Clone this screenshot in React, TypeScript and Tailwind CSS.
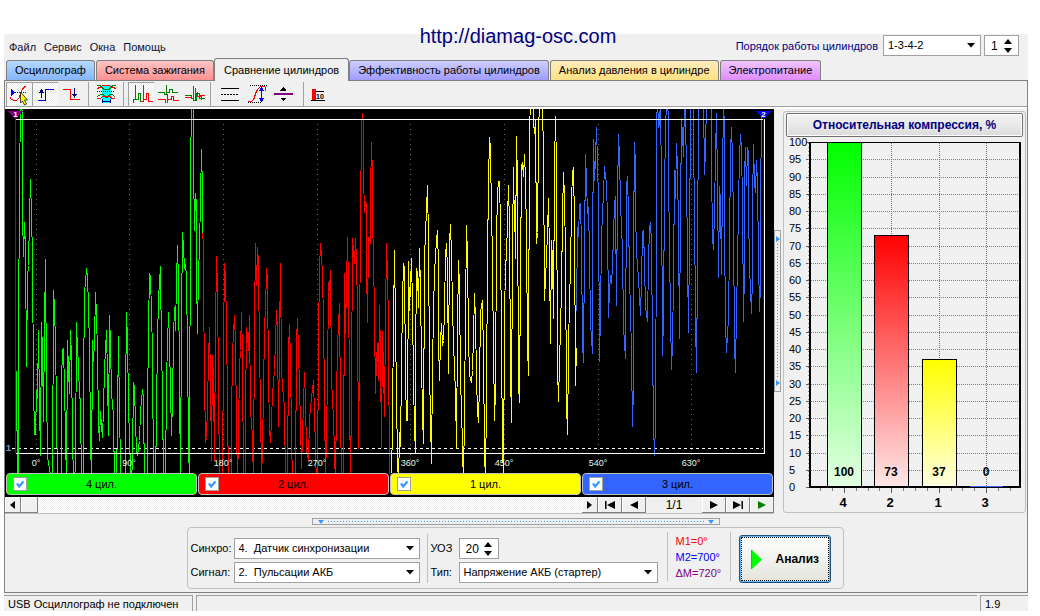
import { useState, type ReactNode } from 'react';
import clsx from 'clsx';

const TABS = [
  { name: 'Осциллограф', style: 'from-[#b5d8ff] to-[#86b6fa]' },
  { name: 'Система зажигания', style: 'from-[#ffc4c4] to-[#ff9090]' },
  { name: 'Сравнение цилиндров', style: '' },
  { name: 'Эффективность работы цилиндров', style: 'from-[#cfcfff] to-[#a09cff]' },
  { name: 'Анализ давления в цилиндре', style: 'from-[#ffecbd] to-[#ffe080]' },
  { name: 'Электропитание', style: 'from-[#f0c4ff] to-[#df8cfa]' },
];

const CYLINDERS = [
  { id: 4, value: 100, x: 844, color: '#00ff00', pale: '#e4ffe4', pill: 'bg-[#00ff00]' },
  { id: 2, value: 73, x: 891, color: '#ff0000', pale: '#ffe8e8', pill: 'bg-[#ff0000]' },
  { id: 1, value: 37, x: 939, color: '#ffff00', pale: '#ffffe0', pill: 'bg-[#ffff00]' },
  { id: 3, value: 0, x: 986, color: '#3366ff', pale: '#e0e8ff', pill: 'bg-[#3366ff]' },
];

// signal traces, one per cylinder, in plot coordinates
const TRACES = [
  {
    color: '#00ff00',
    points:
      '16,371 17,472 18,472 18,335 19,190 20,109 21,109 22,121 22,215 23,256 24,222 25,248 26,366 27,277 28,265 29,218 30,179 31,215 32,257 33,386 34,434 35,434 36,390 37,398 38,330 39,405 40,455 41,322 42,350 43,421 44,325 45,259 46,383 47,457 52,472 53,290 54,307 55,343 56,407 57,472 61,472 61,381 62,349 63,348 64,387 65,434 66,472 67,340 68,370 69,393 70,330 71,359 72,434 73,472 75,467 76,322 77,350 78,362 79,398 80,398 81,472 83,472 83,385 84,293 86,268 87,277 88,306 89,348 90,433 91,472 92,340 93,361 94,340 95,292 96,315 97,352 98,425 99,440 100,411 101,426 102,437 103,408 104,368 105,350 106,330 107,375 108,435 109,315 110,343 111,393 113,415 114,472 116,472 117,415 118,336 119,415 120,460 121,472 125,472 125,398 126,312 127,341 128,403 129,441 131,472 132,455 133,382 134,387 135,423 136,450 137,455 139,440 140,411 142,389 143,398 144,472 147,472 147,410 148,327 149,273 150,276 151,313 152,350 153,472 155,472 156,410 157,340 158,298 160,266 161,350 162,390 163,472 165,472 166,378 168,312 169,343 171,435 172,400 173,336 174,307 175,330 176,280 177,245 178,280 179,378 180,472 181,316 182,232 183,247 184,267 185,265 186,275 187,352 188,438 189,472 190,177 191,109 193,109 193,164 194,230 195,193 196,204 196,274 197,333 198,270 199,249 200,197 201,149 202,191 202,233',
  },
  {
    color: '#ff0000',
    points:
      '202,233 203,244 203,284 204,377 205,442 206,437 207,405 208,358 209,327 210,378 211,460 212,355 213,380 214,460 215,330 216,256 217,288 218,382 219,472 222,472 223,342 224,263 225,278 226,322 227,405 228,472 231,472 231,421 232,352 234,315 235,343 236,423 237,472 238,434 239,365 240,350 241,312 242,353 243,472 245,472 245,413 246,327 247,335 248,350 249,315 250,410 252,436 253,472 254,320 255,243 256,285 257,247 258,261 259,358 260,397 261,472 263,397 264,323 265,310 266,268 267,278 268,377 269,428 270,442 271,420 272,393 274,370 276,310 277,330 278,426 279,340 280,263 281,370 283,398 284,404 285,472 287,472 288,350 289,324 290,360 291,432 292,472 295,472 296,340 297,318 298,350 300,423 301,468 303,403 304,372 305,402 306,450 308,460 309,418 311,397 313,380 314,413 316,472 317,472 318,337 319,268 320,243 321,255 322,274 323,321 324,393 325,472 327,380 328,282 329,290 330,270 331,380 333,418 335,472 336,398 337,345 339,303 340,407 341,472 343,472 344,273 345,333 346,285 347,237 348,283 349,390 350,472 351,390 352,238 353,250 354,263 355,238 356,258 357,312 358,448 359,357 360,215 361,126 362,113 363,125 363,175 364,212 365,201 366,205 366,265 367,322 368,237 369,238 370,243 370,193 371,142 372,177 372,222 373,254 374,317 375,393 376,360 377,343 378,380 379,305 380,353 381,447 382,331 383,370 384,416 385,317 386,243 387,275 388,323 389,472',
  },
  {
    color: '#ffff00',
    points:
      '391,472 392,416 393,321 394,250 395,323 396,398 397,458 398,472 399,432 400,446 401,367 402,300 403,263 404,267 405,377 406,420 407,420 408,261 409,310 411,258 412,305 413,382 414,427 415,453 415,362 416,268 417,273 418,307 419,248 420,288 421,360 422,415 423,443 424,257 426,209 427,185 428,240 429,368 430,420 431,463 432,368 433,310 434,272 435,256 436,239 437,230 438,267 438,340 439,380 440,340 441,323 442,345 443,340 444,310 445,254 446,243 447,270 448,373 449,241 450,224 451,254 452,307 453,343 455,393 456,448 457,330 458,260 459,286 460,380 461,408 463,472 464,408 465,315 466,225 467,255 468,337 469,375 471,382 472,370 473,337 474,293 475,320 476,377 477,411 478,422 479,383 480,312 482,300 483,358 484,446 485,472 486,393 487,258 488,182 489,137 490,147 490,168 491,196 492,273 493,345 494,420 495,390 496,238 497,193 498,181 499,181 500,224 501,353 502,440 503,472 504,320 505,262 506,258 507,218 508,185 509,225 510,370 511,422 512,242 513,167 514,231 515,197 515,258 516,136 517,182 518,385 519,402 520,271 521,166 522,162 523,176 524,154 525,178 526,238 527,345 528,375 529,133 530,109 533,109 533,122 534,133 535,120 536,243 537,232 538,136 539,109 541,109 542,117 543,144 544,300 545,277 546,258 547,232 548,198 549,255 550,343 551,240 552,259 553,318 554,166 555,116 556,165 557,368 558,401 560,327 561,290 562,214 563,172 564,197 565,254 566,402 567,434 568,355 569,293 570,275 571,201 572,172 573,167 574,223 575,385 576,348',
  },
  {
    color: '#3366ff',
    points:
      '576,311 577,227 578,236 579,205 580,203 581,244 582,343 583,362 584,247 585,154 586,180 587,213 588,207 589,253 590,323 592,353 592,247 593,139 594,180 595,157 596,127 597,162 598,200 599,361 600,313 601,238 602,212 603,193 604,166 605,176 606,183 607,218 608,317 609,290 610,275 611,283 612,267 613,234 614,204 615,196 616,305 617,197 618,134 619,156 620,202 621,228 622,248 623,327 625,358 626,185 627,176 628,213 629,277 630,310 631,353 632,426 633,385 633,243 634,142 635,164 635,210 636,252 638,278 640,315 641,280 642,232 643,230 644,263 645,307 647,321 648,261 649,227 650,222 651,242 652,345 653,423 654,455 655,423 656,219 656,125 657,109 658,127 659,123 660,109 660,115 661,173 662,355 663,317 664,187 665,132 666,109 667,109 668,123 668,172 669,248 670,315 671,369 672,343 673,281 674,170 675,198 676,143 677,168 678,230 679,338 680,210 681,118 682,134 683,156 684,109 685,115 686,173 687,258 688,332 689,239 690,120 691,109 693,109 693,149 694,205 695,320 696,372 697,267 698,109 703,109 704,174 705,150 706,109 711,109 711,163 712,238 713,249 714,210 715,154 716,113 717,181 718,277 719,186 720,200 721,274 722,180 723,109 724,132 724,228 725,322 726,352 728,317 729,245 730,151 731,127 732,157 733,224 734,345 735,372 736,307 737,267 738,205 739,155 740,134 741,148 742,203 743,321 744,268 744,175 745,147 746,185 747,147 748,153 748,210 749,267 750,290 751,313 752,275 752,205 753,144 754,182 755,192 756,160 757,182 758,257 759,311 760,285 760,202 761,115 762,115',
  },
];

const GRID = [
  { x: 36, deg: 0 },
  { x: 129, deg: 90 },
  { x: 223, deg: 180 },
  { x: 317, deg: 270 },
  { x: 410, deg: 360 },
  { x: 504, deg: 450 },
  { x: 598, deg: 540 },
  { x: 691, deg: 630 },
];

const pct = (x: number) => `${((x - 5) / 769) * 100}%`;

// samples at the rails run on past the edge of the plot
const offScale = (points: string) => points.replaceAll(',472', ',485').replaceAll(',109', ',98');

function Select({ id, label, options, className }: { id: string; label?: string; options: string[]; className?: string }) {
  return (
    <div className={clsx('relative', className)}>
      <select
        id={id}
        aria-label={label}
        className="block w-full h-[21px] appearance-none border border-[#a0a0a0] bg-white pl-1 pr-4 text-[11px] leading-none text-black outline-none"
      >
        {options.map(o => <option key={o}>{o}</option>)}
      </select>
      <svg className="absolute right-1.5 top-2 pointer-events-none" width="8" height="5" viewBox="0 0 8 5">
        <path d="M0 0h8L4 4.5z" fill="#000" />
      </svg>
    </div>
  );
}

function Spinner({ id, label, initial, className }: { id: string; label?: string; initial: number; className?: string }) {
  const [value, setValue] = useState(initial);
  return (
    <div className={clsx('flex h-[21px] border border-[#a0a0a0] bg-white', className)}>
      <input
        id={id}
        aria-label={label}
        className="min-w-0 flex-1 bg-transparent pl-1.5 text-[12px] text-black outline-none"
        value={value}
        onChange={e => setValue(Number(e.target.value) || 0)}
      />
      <div className="flex w-[14px] flex-col justify-center gap-1">
        <button aria-label="+" onClick={() => setValue(value + 1)}>
          <svg className="block" width="8" height="5" viewBox="0 0 8 5"><path d="M0 5h8L4 0z" /></svg>
        </button>
        <button aria-label="−" onClick={() => setValue(value - 1)}>
          <svg className="block" width="8" height="5" viewBox="0 0 8 5"><path d="M0 0h8L4 5z" /></svg>
        </button>
      </div>
    </div>
  );
}

function ToolButton({ x, wide, pressed, title, children }: { x: number; wide?: boolean; pressed?: boolean; title: string; children: ReactNode }) {
  const w = wide ? 28 : 26;
  return (
    <button
      aria-label={title}
      className={clsx(
        'h-6',
        wide ? 'w-7' : 'w-[26px]',
        pressed && 'border-l border-t border-[#a0a0a0] bg-[repeating-conic-gradient(#ffffff_0_25%,#ececec_0_50%)] bg-[length:2px_2px]'
      )}
    >
      <svg
        className={clsx('block', pressed && '-ml-px -mt-px')}
        width={w}
        height="24"
        viewBox={`${x} 82 ${w} 24`}
        fill="none"
        shapeRendering="crispEdges"
      >
        {children}
      </svg>
    </button>
  );
}

const Separator = () => <div className="mx-1 h-6 w-px bg-[#a0a0a0]" />;

function Toolbar() {
  return (
    <div className="flex h-[25px] items-end pl-px">
      <ToolButton x={6} pressed title="Курсор">
        <path d="M11 88.5v8l4-4z" fill="#0000ff" />
        <path d="M15 92.5h11" stroke="#0000ff" strokeDasharray="1 1" />
        <path d="M10 97.5c1 3 7 4.500 9 .5s2-7 4-9.500 2-2 3-2" stroke="#ff0000" />
        <path d="M20.500 92v11l2-2 2 4 2-1-2-4h3z" fill="#ffff00" stroke="#000" strokeWidth=".7" shapeRendering="auto" />
      </ToolButton>
      <ToolButton x={32} pressed title="Фронт">
        <path d="M38 100.500h7.500v-11h8.500" stroke="#0000c8" />
        <path d="M41.500 91v7" stroke="#000080" />
        <path d="M39 92.500h5l-2.500-4z" fill="#000080" />
      </ToolButton>
      <ToolButton x={58} title="Спад">
        <path d="M63 89h8v10h9v1h-10v-10h-7z" fill="#ff0000" />
        <path d="M74.500 88v7" stroke="#000080" />
        <path d="M72 94h5l-2.500 4z" fill="#000080" />
      </ToolButton>
      <Separator />
      <ToolButton x={94} title="Диапазон">
        <path d="M103 85h9v18h-9z" fill="#00ffff" />
        <path d="M98 85.500h3l4 4h5l4-4h3" stroke="#008000" />
        <path d="M98 88.500l3-1 3-2h6l4 2 3 1" stroke="#ff0000" />
        <path d="M98 91.500h18" stroke="#000" strokeDasharray="1 1" />
        <path d="M98 96.500l4-2h2l3 3h1l3-3h2l3 2" stroke="#008000" />
        <path d="M98 98.500h3l3-2h7l2 2h3" stroke="#ff0000" />
        <path d="M103.500 99v4M111.500 99v4M104 101.500h7" stroke="#000080" />
      </ToolButton>
      <Separator />
      <ToolButton x={129} pressed title="Последовательно">
        <path d="M134.500 103v-4h2v-14M136.500 99.500h3v-6h2v8" stroke="#008000" />
        <path d="M141.500 101.500h3v-16.500M144.500 99.500h3v-6h2v8h4" stroke="#ff0000" />
      </ToolButton>
      <ToolButton x={155} title="Раздельно">
        <path d="M159 92.500h6v2h2v-10v8h3v-3h3v3h6" stroke="#008000" />
        <path d="M159 99.500h7v3M168.500 94v9M169 99.500h3v-3h2v4h6" stroke="#ff0000" />
      </ToolButton>
      <ToolButton x={181} title="Совмещение">
        <path d="M186 95.500h6v3h2v-13v15h3v-7h3v5h6" stroke="#008000" />
        <path d="M186 97.500h7M196.500 88v12M198 91.500v5h4v3M200 95.500h6" stroke="#ff0000" />
      </ToolButton>
      <Separator />
      <ToolButton x={216} wide title="Линии">
        <path d="M222 88.500h18M222 100.500h18" stroke="#000" />
        <path d="M222 94.500h18" stroke="#000" strokeDasharray="2 1" />
      </ToolButton>
      <ToolButton x={244} wide title="Амплитуда">
        <path d="M251 85.500h17M249 102.500h13" stroke="#000" strokeDasharray="1 1" />
        <path d="M249 101.500c5 1 6-2 7-6s3-9 8-9.500c3 0 3 2 3 5" stroke="#ff0000" />
        <path d="M262.500 90v9" stroke="#0000ff" />
        <path d="M259.500 91h6l-3-4zM259.500 98h6l-3 4z" fill="#0000ff" />
      </ToolButton>
      <ToolButton x={272} wide title="Сдвиг">
        <path d="M275 93h19v2h-19z" fill="#800080" />
        <path d="M281.500 90.500h6l-3-3.500zM281.500 98h6l-3 3.500z" fill="#000" />
      </ToolButton>
      <Separator />
      <ToolButton x={309} wide title="Цифры">
        <path d="M313 89h4v11h-4z" fill="#ff0000" />
        <path d="M317 91.500h8M312 100.500h14" stroke="#000" />
        <text x="317" y="99" fontSize="7" fontWeight="bold" fill="#000">10</text>
      </ToolButton>
    </div>
  );
}

function Scope() {
  return (
    <svg className="block h-[364px] w-full bg-black">
      <svg width="100%" height="100%" viewBox="5 109 769 364" preserveAspectRatio="none" fill="none" shapeRendering="crispEdges">
        {GRID.map(g => (
          <path key={g.x} d={`M${g.x + 0.5} 124V462`} stroke="#686868" strokeDasharray="1 4" />
        ))}
        <path d="M15.500 119V453" stroke="#800080" />
        <path d="M12 448.500H763" stroke="#fff" strokeDasharray="3 3" />
        <g transform="translate(.5 .5)">
          {TRACES.map(t => <polyline key={t.color} points={offScale(t.points)} stroke={t.color} />)}
        </g>
        <path d="M16 119.500H763M16 453.500H764.500V119" stroke="#fff" />
        <path d="M763.500 119V453" stroke="#0000ff" />
        <path d="M8 111h15l-7.500 8z" fill="#800080" />
        <path d="M756 111h15l-7.500 8z" fill="#0000ff" />
      </svg>
      <text x={pct(15.5)} y="8" fontSize="8" fontWeight="bold" fill="#fff" textAnchor="middle">1</text>
      <text x={pct(763.5)} y="8" fontSize="8" fontWeight="bold" fill="#fff" textAnchor="middle">2</text>
      <text x="1" y="342" fontSize="9" fontWeight="bold" fill="#7aa0c8">1</text>
      {GRID.map(g => (
        <text key={g.x} x={pct(g.x)} y="357" fontSize="9" fill="#e8f8e8" textAnchor="middle">{g.deg}°</text>
      ))}
    </svg>
  );
}

const NAV_BUTTON = 'flex h-4 items-center justify-center border-b border-r border-[#808080] bg-[#f0f0f0] shadow-[inset_1px_1px_#fff]';

function ScrollBar() {
  return (
    <div className="flex h-[17px] border-b border-[#c0c0c0] bg-[repeating-conic-gradient(#ffffff_0_25%,#f0f0f0_0_50%)] bg-[length:2px_2px]">
      <button aria-label="Влево" className={clsx(NAV_BUTTON, 'w-4')}>
        <svg width="5" height="8"><path d="M5 0v8L0 4z" /></svg>
      </button>
      <div className={clsx(NAV_BUTTON, 'w-[17px]')} />
      <div className="flex-1" />
      <button aria-label="Вправо" className={clsx(NAV_BUTTON, 'w-4')}>
        <svg width="5" height="8"><path d="M0 0v8l5-4z" /></svg>
      </button>
      <button aria-label="В начало" className={clsx(NAV_BUTTON, 'w-6')}>
        <svg width="10" height="8"><path d="M0 0h1.500v8H0zM10 0v8L2 4z" /></svg>
      </button>
      <button aria-label="Назад" className={clsx(NAV_BUTTON, 'w-6')}>
        <svg width="8" height="8"><path d="M8 0v8L0 4z" /></svg>
      </button>
      <div className="w-14 bg-[#f0f0f0] text-center text-[12px] leading-4">1/1</div>
      <button aria-label="Вперёд" className={clsx(NAV_BUTTON, 'w-6')}>
        <svg width="8" height="8"><path d="M0 0v8l8-4z" /></svg>
      </button>
      <button aria-label="В конец" className={clsx(NAV_BUTTON, 'w-6')}>
        <svg width="10" height="8"><path d="M8.500 0H10v8H8.500zM0 0v8l8-4z" /></svg>
      </button>
      <button aria-label="Пуск" className={clsx(NAV_BUTTON, 'w-6')}>
        <svg width="8" height="8"><path d="M0 0v8l8-4z" fill="#008000" /></svg>
      </button>
    </div>
  );
}

function CompressionChart() {
  const y = (v: number) => 487 - v * 3.45;
  const levels = Array.from({ length: 21 }, (_, i) => i * 5);
  return (
    <svg className="block w-full" viewBox="784 137 241 375">
      <defs>
        {CYLINDERS.map(c => (
          <linearGradient key={c.id} id={`bar${c.id}`} x1="0" y1="0" x2="0" y2="1">
            <stop offset="0" stopColor={c.color} />
            <stop offset="1" stopColor={c.pale} />
          </linearGradient>
        ))}
      </defs>
      <g shapeRendering="crispEdges" fill="none">
        {levels.map(v => (
          <g key={v}>
            <path d={`M811 ${Math.round(y(v)) + 0.5}H1020`} stroke="#808080" strokeDasharray="1 1" />
            <path d={`M806 ${Math.round(y(v)) + 0.5}h4`} stroke="#606060" />
          </g>
        ))}
        <path d="M808.500 143V487" stroke="#909090" strokeDasharray="1 3" />
        {CYLINDERS.map(c => (
          <g key={c.id}>
            <path d={`M${c.x + 0.5} 143V487`} stroke="#707070" strokeDasharray="1 1" />
            <path d={`M${c.x + 0.5} 488v5`} stroke="#606060" />
          </g>
        ))}
        {[820, 832, 856, 868, 879, 903, 915, 927, 951, 962, 974, 998, 1010].map(x => (
          <path key={x} d={`M${x + 0.5} 488v3`} stroke="#808080" />
        ))}
        <path d="M809 142.500H1021" stroke="#000" />
        {CYLINDERS.map(c =>
          c.value > 0 && (
            <rect
              key={c.id}
              x={c.x - 16.5}
              y={Math.round(y(c.value)) + 0.5}
              width="34"
              height={487 - Math.round(y(c.value))}
              fill={`url(#bar${c.id})`}
              stroke="#000"
            />
          )
        )}
        <path d="M810 142V488M1020 142V488M809 487H1021" stroke="#000" strokeWidth="2" />
        <path d="M970 486.500h33" stroke="#3366ff" />
      </g>
      {levels.map(v => (
        <text key={v} x="789" y={y(v) + 4} fontSize="11">{v}</text>
      ))}
      {CYLINDERS.map(c => (
        <g key={c.id} fontWeight="bold" textAnchor="middle">
          <text x={c.x} y="476" fontSize="12">{c.value}</text>
          <text x={c.x - 1} y="507" fontSize="13">{c.id}</text>
        </g>
      ))}
    </svg>
  );
}

function CylinderToggle({ id, pill }: { id: number; pill: string }) {
  const [shown, setShown] = useState(true);
  return (
    <label className={clsx('relative flex h-[22px] flex-1 items-center justify-center rounded-[4px] border border-[#c0c0c0] text-[11px]', pill)}>
      <input
        type="checkbox"
        checked={shown}
        onChange={() => setShown(!shown)}
        className="absolute left-1.5 size-[14px] appearance-none border border-[#a0a0a0] bg-white"
      />
      {shown && (
        <svg className="pointer-events-none absolute left-2 size-2.5" viewBox="0 0 10 10">
          <path d="M2 4.500l2.200 3L8.500 2.500" stroke="#3399ff" strokeWidth="2.200" fill="none" />
        </svg>
      )}
      {id} цил.
    </label>
  );
}

function ControlPanel() {
  return (
    <div className="flex h-[62px] rounded-[4px] border border-[#c0c0c0] pl-[3px] text-[11px]">
      <div className="flex flex-col gap-[3px] pt-2.5">
        <div className="flex items-center">
          <label htmlFor="sync" className="w-[43px]">Синхро:</label>
          <Select id="sync" className="w-[186px]" options={['4.\u00a0\u00a0Датчик синхронизации', '1.\u00a0\u00a0Вход 1']} />
        </div>
        <div className="flex items-center">
          <label htmlFor="signal" className="w-[43px]">Сигнал:</label>
          <Select id="signal" className="w-[186px]" options={['2.\u00a0\u00a0Пульсации АКБ', '1.\u00a0\u00a0Вход 1']} />
        </div>
      </div>
      <div className="ml-[7px] mr-[3px] mt-1.5 h-[49px] w-px bg-[#c0c0c0]" />
      <div className="flex flex-col gap-[3px] pt-2.5">
        <div className="flex items-center">
          <label htmlFor="angle" className="w-7">УОЗ</label>
          <Spinner id="angle" initial={20} className="w-10" />
        </div>
        <div className="flex items-center">
          <label htmlFor="kind" className="w-7">Тип:</label>
          <Select id="kind" className="w-[199px]" options={['Напряжение АКБ (стартер)', 'Ток стартера']} />
        </div>
      </div>
      <div className="ml-[9px] mr-2 mt-1 h-[49px] w-px bg-[#c0c0c0]" />
      <div className="w-[54px] pt-[5px] leading-4">
        <p className="text-[#ff0000]">M1=0°</p>
        <p className="text-[#0000ff]">M2=700°</p>
        <p className="text-[#800080]">ΔM=720°</p>
      </div>
      <div className="mr-2 mt-1 h-[49px] w-px bg-[#c0c0c0]" />
      <button className="mr-[12px] mt-[7px] h-12 w-[92px] rounded-[3px] border border-[#1c5180] bg-gradient-to-b from-white to-[#e4e4dc] p-px shadow-[inset_0_0_0_1px_#66b7f0]">
        <span className="flex h-full items-center gap-3.5 border border-dotted border-black pl-[9px] text-[12px] font-bold">
          <svg width="11" height="19" viewBox="0 0 11 19">
            <path d="M.5 0v19" stroke="#808080" />
            <path d="M1 0v19l10-9.500z" fill="#00ff00" />
          </svg>
          Анализ
        </span>
      </button>
    </div>
  );
}

export default function App() {
  const [active, setActive] = useState(2);

  return (
    <div className="relative bg-white pb-[5px] pl-1 pr-3 pt-[34px] font-['Liberation_Sans',Arial,sans-serif] text-black">
      <a href="http://diamag-osc.com" className="absolute inset-x-0 top-6 mx-auto w-fit pr-1 text-[20px] leading-6 text-[#000080]">
        http://diamag-osc.com
      </a>
      <div className="bg-[#f0f0f0]">
        <header className="flex h-6 items-start">
          <nav className="flex gap-2 pl-[5px] pt-[5px] text-[11px] leading-4 text-[#101030]">
            {['Файл', 'Сервис', 'Окна', 'Помощь'].map(m => <button key={m}>{m}</button>)}
          </nav>
          <div className="flex-1" />
          <label htmlFor="order" className="mr-[5px] pt-1 text-[11px] leading-4 text-[#000080]">Порядок работы цилиндров</label>
          <Select id="order" className="mt-px w-[98px]" options={['1-3-4-2', '1-2-4-3', '1-4-3-2']} />
          <Spinner id="first" label="Первый цилиндр" initial={1} className="ml-[3px] mr-[9px] mt-px w-[35px]" />
        </header>

        <div className="flex h-[23px] items-end gap-px border-b border-[#808080] pl-0.5">
          {TABS.map((t, i) => (
            <button
              key={t.name}
              onClick={() => setActive(i)}
              className={clsx(
                'rounded-t-[3px] border border-b-0 border-[#808080] text-[11px]',
                i === active ? '-mx-px -mb-px h-[23px] bg-[#f0f0f0] px-[9px]' : 'h-5 bg-gradient-to-b px-2',
                t.style
              )}
            >
              {t.name}
            </button>
          ))}
        </div>

        <main className="border-x border-[#808080]">
          <Toolbar />
          <div className="h-[3px] border-t border-[#a0a0a0] bg-white" />
          <div className="flex">
            <section className="min-w-0 flex-1">
              <Scope />
              <div className="flex gap-px bg-black px-px pb-0.5">
                {CYLINDERS.map(c => <CylinderToggle key={c.id} id={c.id} pill={c.pill} />)}
              </div>
              <ScrollBar />
            </section>
            <div className="w-[9px] self-center pb-[2px]">
              <div className="flex h-[162px] w-[7px] flex-col items-center border border-[#a0a0a0] py-[5px]">
                <svg width="4" height="6"><path d="M0 0v6l4-3z" fill="#3399ff" /></svg>
                <div className="my-0.5 w-px flex-1 bg-[repeating-linear-gradient(#3399ff_0_1px,transparent_1px_3px)]" />
                <svg width="4" height="6"><path d="M0 0v6l4-3z" fill="#3399ff" /></svg>
              </div>
            </div>
            <section className="mb-px mr-px mt-0.5 w-[243px] rounded-[3px] border border-[#c0c0c0]">
              <h2 className="mx-0.5 mt-px h-6 rounded-[2px] border border-[#707070] bg-gradient-to-b from-[#f4f4f4] to-[#dcdcdc] text-center text-[12px] font-bold leading-[22px] text-[#000080] shadow-[inset_0_0_0_1px_#fff]">
                Относительная компрессия, %
              </h2>
              <CompressionChart />
            </section>
          </div>

          <div className="flex flex-col items-center pb-[3px]">
            <div className="mt-1 flex h-[7px] w-[408px] items-center border border-[#a0a0a0] px-[5px]">
              <svg width="6" height="4"><path d="M0 0h6L3 4z" fill="#3399ff" /></svg>
              <div className="mx-1 h-px flex-1 bg-[repeating-linear-gradient(90deg,#3399ff_0_1px,transparent_1px_3px)]" />
              <svg width="6" height="4"><path d="M0 0h6L3 4z" fill="#3399ff" /></svg>
            </div>
            <div className="mt-0.5 pr-0.5">
              <ControlPanel />
            </div>
          </div>
        </main>

        <footer className="flex h-[19px] gap-[3px] border-t border-[#808080] pt-0.5 text-[11px] leading-4">
          <div className="w-[189px] border-t border-r border-[#a0a0a0] pl-1">USB Осциллограф не подключен</div>
          <div className="flex-1 border-l border-t border-[#a0a0a0]" />
          <div className="w-12 border-l border-t border-[#a0a0a0] pl-1">1.9</div>
        </footer>
      </div>
    </div>
  );
}
